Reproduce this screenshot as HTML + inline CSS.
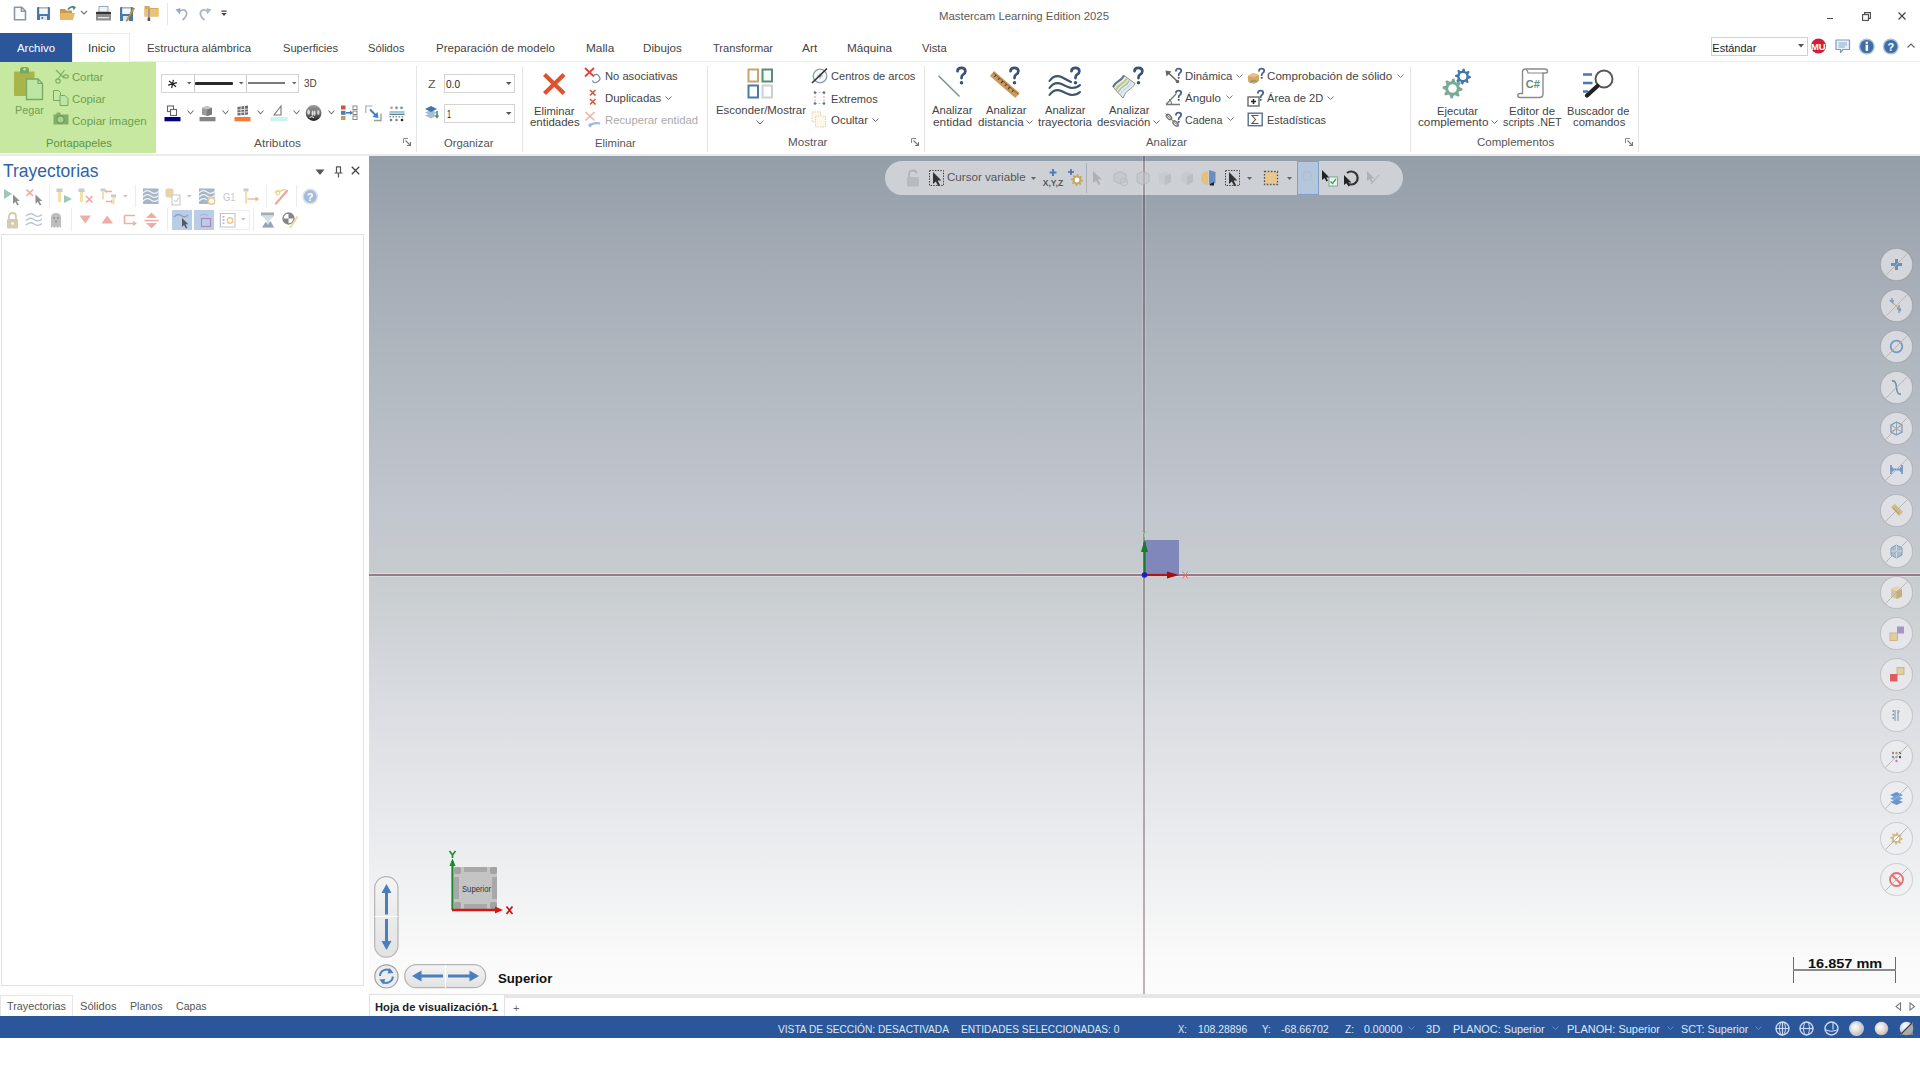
<!DOCTYPE html>
<html><head><meta charset="utf-8"><title>Mastercam</title>
<style>
html,body{margin:0;padding:0;width:1920px;height:1080px;overflow:hidden;background:#fff;}
body{position:relative;font-family:"Liberation Sans",sans-serif;}
.t{position:absolute;z-index:5;white-space:nowrap;line-height:normal;transform-origin:0 0;}
.r{position:absolute;}
svg.r{overflow:visible;}
</style></head><body>
<div class="r" style="left:0px;top:0px;width:1920px;height:156px;background:#fff"></div>
<div class="r" style="left:0px;top:33px;width:72px;height:29px;background:#2b579a"></div>
<div class="r" style="left:72px;top:33px;width:58px;height:29px;background:#fff;border:1px solid #ececec;border-bottom:none;box-sizing:border-box"></div>
<div class="r" style="left:130px;top:61px;width:1790px;height:1px;background:#ececec"></div>
<div class="r" style="left:0px;top:62px;width:156px;height:91px;background:#c6e8a0"></div>
<div class="r" style="left:0px;top:154px;width:1920px;height:2px;background:#ebebeb"></div>
<div class="r" style="left:369px;top:156px;width:1551px;height:838px;background:linear-gradient(to bottom,#939ea8 0px,#a3aab4 96px,#b0b7bf 206px,#c1c5ce 346px,#c7cccf 420px,#d9dce1 546px,#ecedef 696px,#fafafa 806px,#fcfcfc 838px)"></div>
<div class="r" style="left:0px;top:156px;width:369px;height:838px;background:#fff"></div>
<div class="r" style="left:1px;top:234px;width:363px;height:752px;background:#fff;border:1px solid #e2e2e2;box-sizing:border-box"></div>
<div class="r" style="left:369px;top:994px;width:1551px;height:4px;background:#e6e6e6"></div>
<div class="r" style="left:0px;top:1016px;width:1920px;height:22px;background:#2b579a"></div>
<div class="r" style="left:369px;top:573px;width:1551px;height:1px;background:rgba(255,245,255,0.35)"></div>
<div class="r" style="left:369px;top:576px;width:1551px;height:1px;background:rgba(255,245,255,0.35)"></div>
<div class="r" style="left:369px;top:574px;width:1551px;height:2px;background:#9a7a87"></div>
<div class="r" style="left:416px;top:66px;width:1px;height:86px;background:#e4e4e4"></div>
<div class="r" style="left:522px;top:66px;width:1px;height:86px;background:#e4e4e4"></div>
<div class="r" style="left:707px;top:66px;width:1px;height:86px;background:#e4e4e4"></div>
<div class="r" style="left:924px;top:66px;width:1px;height:86px;background:#e4e4e4"></div>
<div class="r" style="left:1410px;top:66px;width:1px;height:86px;background:#e4e4e4"></div>
<div class="r" style="left:1638px;top:66px;width:1px;height:86px;background:#e4e4e4"></div>
<div class="t" style="left:939.00px;top:10.35px;font-size:11px;color:#5a5a5a;font-weight:normal;transform:scaleX(1.0336);">Mastercam Learning Edition 2025</div>
<div class="t" style="left:17.30px;top:42.05px;font-size:11px;color:#ffffff;font-weight:normal;transform:scaleX(1.0360);">Archivo</div>
<div class="t" style="left:88.00px;top:42.05px;font-size:11px;color:#333;font-weight:normal;transform:scaleX(1.0632);">Inicio</div>
<div class="t" style="left:147.00px;top:42.05px;font-size:11px;color:#444;font-weight:normal;transform:scaleX(1.0311);">Estructura alámbrica</div>
<div class="t" style="left:283.00px;top:42.05px;font-size:11px;color:#444;font-weight:normal;transform:scaleX(1.0108);">Superficies</div>
<div class="t" style="left:368.00px;top:42.05px;font-size:11px;color:#444;font-weight:normal;transform:scaleX(1.0145);">Sólidos</div>
<div class="t" style="left:436.00px;top:42.05px;font-size:11px;color:#444;font-weight:normal;transform:scaleX(1.0463);">Preparación de modelo</div>
<div class="t" style="left:586.00px;top:42.05px;font-size:11px;color:#444;font-weight:normal;transform:scaleX(1.0767);">Malla</div>
<div class="t" style="left:643.40px;top:42.05px;font-size:11px;color:#444;font-weight:normal;transform:scaleX(1.0577);">Dibujos</div>
<div class="t" style="left:712.50px;top:42.05px;font-size:11px;color:#444;font-weight:normal;transform:scaleX(1.0086);">Transformar</div>
<div class="t" style="left:802.30px;top:42.05px;font-size:11px;color:#444;font-weight:normal;transform:scaleX(1.0814);">Art</div>
<div class="t" style="left:847.00px;top:42.05px;font-size:11px;color:#444;font-weight:normal;transform:scaleX(1.0665);">Máquina</div>
<div class="t" style="left:921.90px;top:42.05px;font-size:11px;color:#444;font-weight:normal;transform:scaleX(1.0183);">Vista</div>
<div class="t" style="left:1712.30px;top:41.55px;font-size:11px;color:#222;font-weight:normal;">Estándar</div>
<div class="t" style="left:14.50px;top:103.80px;font-size:11px;color:#6f9f52;font-weight:normal;transform:scaleX(0.9795);">Pegar</div>
<div class="t" style="left:72.00px;top:71.30px;font-size:11px;color:#6f9f52;font-weight:normal;transform:scaleX(1.0226);">Cortar</div>
<div class="t" style="left:72.00px;top:92.55px;font-size:11px;color:#6f9f52;font-weight:normal;transform:scaleX(1.0339);">Copiar</div>
<div class="t" style="left:72.00px;top:114.55px;font-size:11px;color:#6f9f52;font-weight:normal;transform:scaleX(1.0450);">Copiar imagen</div>
<div class="t" style="left:46.25px;top:136.79px;font-size:11px;color:#5f9545;font-weight:normal;transform:scaleX(1.0143);">Portapapeles</div>
<div class="t" style="left:303.70px;top:77.45px;font-size:11px;color:#444;font-weight:normal;transform:scaleX(0.9032);">3D</div>
<div class="t" style="left:253.80px;top:136.54px;font-size:11px;color:#555;font-weight:normal;transform:scaleX(1.0828);">Atributos</div>
<div class="t" style="left:428.00px;top:78.14px;font-size:11px;color:#555;font-weight:normal;transform:scaleX(1.1312);">Z</div>
<div class="t" style="left:446.00px;top:78.05px;font-size:11px;color:#222;font-weight:normal;transform:scaleX(0.9156);">0.0</div>
<div class="t" style="left:447.00px;top:107.84px;font-size:11px;color:#222;font-weight:normal;transform:scaleX(0.6539);">1</div>
<div class="t" style="left:444.40px;top:136.74px;font-size:11px;color:#555;font-weight:normal;transform:scaleX(1.0250);">Organizar</div>
<div class="t" style="left:534.20px;top:104.75px;font-size:11px;color:#444;font-weight:normal;transform:scaleX(1.0219);">Eliminar</div>
<div class="t" style="left:529.50px;top:115.64px;font-size:11px;color:#444;font-weight:normal;transform:scaleX(1.0419);">entidades</div>
<div class="t" style="left:604.50px;top:70.34px;font-size:11px;color:#444;font-weight:normal;transform:scaleX(1.0164);">No asociativas</div>
<div class="t" style="left:604.50px;top:92.25px;font-size:11px;color:#444;font-weight:normal;transform:scaleX(1.0346);">Duplicadas</div>
<div class="t" style="left:604.50px;top:114.05px;font-size:11px;color:#aaa;font-weight:normal;transform:scaleX(1.0277);">Recuperar entidad</div>
<div class="t" style="left:594.80px;top:136.74px;font-size:11px;color:#555;font-weight:normal;transform:scaleX(1.0245);">Eliminar</div>
<div class="t" style="left:715.60px;top:104.45px;font-size:11px;color:#444;font-weight:normal;transform:scaleX(1.0368);">Esconder/Mostrar</div>
<div class="t" style="left:830.60px;top:70.05px;font-size:11px;color:#444;font-weight:normal;transform:scaleX(1.0077);">Centros de arcos</div>
<div class="t" style="left:830.60px;top:92.55px;font-size:11px;color:#444;font-weight:normal;transform:scaleX(1.0053);">Extremos</div>
<div class="t" style="left:830.60px;top:114.45px;font-size:11px;color:#444;font-weight:normal;transform:scaleX(1.0436);">Ocultar</div>
<div class="t" style="left:788.00px;top:136.34px;font-size:11px;color:#555;font-weight:normal;transform:scaleX(1.0596);">Mostrar</div>
<div class="t" style="left:932.10px;top:104.45px;font-size:11px;color:#444;font-weight:normal;transform:scaleX(1.0217);">Analizar</div>
<div class="t" style="left:932.50px;top:115.64px;font-size:11px;color:#444;font-weight:normal;transform:scaleX(1.0808);">entidad</div>
<div class="t" style="left:985.60px;top:104.45px;font-size:11px;color:#444;font-weight:normal;transform:scaleX(1.0217);">Analizar</div>
<div class="t" style="left:978.00px;top:115.64px;font-size:11px;color:#444;font-weight:normal;transform:scaleX(1.0538);">distancia</div>
<div class="t" style="left:1045.00px;top:104.45px;font-size:11px;color:#444;font-weight:normal;transform:scaleX(1.0217);">Analizar</div>
<div class="t" style="left:1038.00px;top:115.64px;font-size:11px;color:#444;font-weight:normal;transform:scaleX(1.0497);">trayectoria</div>
<div class="t" style="left:1108.50px;top:104.45px;font-size:11px;color:#444;font-weight:normal;transform:scaleX(1.0217);">Analizar</div>
<div class="t" style="left:1097.25px;top:115.64px;font-size:11px;color:#444;font-weight:normal;transform:scaleX(1.0274);">desviación</div>
<div class="t" style="left:1185.00px;top:70.45px;font-size:11px;color:#444;font-weight:normal;transform:scaleX(1.0339);">Dinámica</div>
<div class="t" style="left:1185.00px;top:92.25px;font-size:11px;color:#444;font-weight:normal;transform:scaleX(1.0511);">Ángulo</div>
<div class="t" style="left:1185.00px;top:114.05px;font-size:11px;color:#444;font-weight:normal;transform:scaleX(0.9707);">Cadena</div>
<div class="t" style="left:1267.00px;top:70.45px;font-size:11px;color:#444;font-weight:normal;transform:scaleX(1.0555);">Comprobación de sólido</div>
<div class="t" style="left:1267.00px;top:92.25px;font-size:11px;color:#444;font-weight:normal;transform:scaleX(1.0118);">Área de 2D</div>
<div class="t" style="left:1267.00px;top:114.05px;font-size:11px;color:#444;font-weight:normal;transform:scaleX(0.9949);">Estadísticas</div>
<div class="t" style="left:1146.00px;top:136.34px;font-size:11px;color:#555;font-weight:normal;transform:scaleX(1.0317);">Analizar</div>
<div class="t" style="left:1437.40px;top:105.05px;font-size:11px;color:#444;font-weight:normal;transform:scaleX(1.0161);">Ejecutar</div>
<div class="t" style="left:1418.40px;top:116.05px;font-size:11px;color:#444;font-weight:normal;transform:scaleX(1.0662);">complemento</div>
<div class="t" style="left:1509.00px;top:105.05px;font-size:11px;color:#444;font-weight:normal;transform:scaleX(1.0494);">Editor de</div>
<div class="t" style="left:1503.00px;top:116.05px;font-size:11px;color:#444;font-weight:normal;transform:scaleX(0.9801);">scripts .NET</div>
<div class="t" style="left:1567.40px;top:105.05px;font-size:11px;color:#444;font-weight:normal;transform:scaleX(1.0088);">Buscador de</div>
<div class="t" style="left:1572.50px;top:116.05px;font-size:11px;color:#444;font-weight:normal;transform:scaleX(1.0306);">comandos</div>
<div class="t" style="left:1477.20px;top:136.34px;font-size:11px;color:#555;font-weight:normal;transform:scaleX(1.0436);">Complementos</div>
<div class="t" style="left:2.50px;top:161.01px;font-size:18px;color:#2f64a8;font-weight:normal;transform:scaleX(0.9709);">Trayectorias</div>
<div class="t" style="left:7.00px;top:1000.04px;font-size:11px;color:#555;font-weight:normal;transform:scaleX(0.9816);">Trayectorias</div>
<div class="t" style="left:80.00px;top:1000.04px;font-size:11px;color:#555;font-weight:normal;transform:scaleX(1.0117);">Sólidos</div>
<div class="t" style="left:130.00px;top:1000.04px;font-size:11px;color:#555;font-weight:normal;transform:scaleX(0.9663);">Planos</div>
<div class="t" style="left:175.60px;top:1000.04px;font-size:11px;color:#555;font-weight:normal;transform:scaleX(0.9624);">Capas</div>
<div class="t" style="left:946.60px;top:170.74px;font-size:11px;color:#555;font-weight:normal;transform:scaleX(1.0539);">Cursor variable</div>
<div class="t" style="left:497.70px;top:970.94px;font-size:13px;color:#111;font-weight:bold;transform:scaleX(1.0158);">Superior</div>
<div class="t" style="left:1808.30px;top:955.74px;font-size:13px;color:#111;font-weight:bold;transform:scaleX(1.1159);">16.857 mm</div>
<div class="t" style="left:375.00px;top:1000.64px;font-size:11px;color:#222;font-weight:bold;transform:scaleX(1.0163);">Hoja de visualización-1</div>
<div class="t" style="left:777.90px;top:1022.70px;font-size:10.5px;color:#dfe8f5;font-weight:normal;transform:scaleX(0.9694);">VISTA DE SECCIÓN: DESACTIVADA</div>
<div class="t" style="left:961.30px;top:1022.70px;font-size:10.5px;color:#dfe8f5;font-weight:normal;transform:scaleX(0.9661);">ENTIDADES SELECCIONADAS: 0</div>
<div class="t" style="left:1178.40px;top:1022.70px;font-size:10.5px;color:#dfe8f5;font-weight:normal;transform:scaleX(0.8971);">X:</div>
<div class="t" style="left:1197.50px;top:1022.70px;font-size:10.5px;color:#dfe8f5;font-weight:normal;transform:scaleX(0.9913);">108.28896</div>
<div class="t" style="left:1262.30px;top:1022.70px;font-size:10.5px;color:#dfe8f5;font-weight:normal;transform:scaleX(0.9314);">Y:</div>
<div class="t" style="left:1281.00px;top:1022.70px;font-size:10.5px;color:#dfe8f5;font-weight:normal;transform:scaleX(1.0098);">-68.66702</div>
<div class="t" style="left:1345.00px;top:1022.70px;font-size:10.5px;color:#dfe8f5;font-weight:normal;transform:scaleX(0.9645);">Z:</div>
<div class="t" style="left:1363.90px;top:1022.70px;font-size:10.5px;color:#dfe8f5;font-weight:normal;transform:scaleX(1.0092);">0.00000</div>
<div class="t" style="left:1425.60px;top:1022.70px;font-size:10.5px;color:#dfe8f5;font-weight:normal;transform:scaleX(1.0505);">3D</div>
<div class="t" style="left:1452.75px;top:1022.70px;font-size:10.5px;color:#dfe8f5;font-weight:normal;transform:scaleX(1.0338);">PLANOC: Superior</div>
<div class="t" style="left:1566.60px;top:1022.70px;font-size:10.5px;color:#dfe8f5;font-weight:normal;transform:scaleX(1.0485);">PLANOH: Superior</div>
<div class="t" style="left:1680.80px;top:1022.70px;font-size:10.5px;color:#dfe8f5;font-weight:normal;transform:scaleX(1.0297);">SCT: Superior</div>
<svg class="r" style="left:13px;top:6px;" width="14" height="15" viewBox="0 0 14 15"><path d="M1.5 1.2 H8.5 L12.5 5 V13.8 H1.5 Z" fill="#fafcff" stroke="#8c97a2" stroke-width="1.6" stroke-linejoin="round"/><path d="M8.3 1.3 V5.2 H12.4" fill="none" stroke="#8c97a2" stroke-width="1.4"/></svg>
<svg class="r" style="left:36px;top:6px;" width="15" height="15" viewBox="0 0 15 15"><path d="M1 2 Q1 1 2 1 H13 Q14 1 14 2 V14 H1 Z" fill="#4b78a9"/><rect x="3.2" y="1" width="8.6" height="1.4" fill="#e0a890"/><rect x="3.2" y="2.4" width="8.6" height="5.6" fill="#f4f8fc"/><rect x="4" y="10" width="7" height="4" fill="#dfe8f2"/><rect x="5.5" y="11.2" width="1.6" height="1.6" fill="#37587d"/></svg>
<svg class="r" style="left:59px;top:5px;" width="18" height="16" viewBox="0 0 18 16"><path d="M1 4 H6 L7.5 5.5 H13 V15 H1 Z" fill="#c89b4a"/><path d="M1.5 8 H16 L14 15 H1 Z" fill="#e8b968"/><path d="M9 4.5 Q12 0.5 15.5 2.5" fill="none" stroke="#4e8a70" stroke-width="1.8"/><path d="M13.5 0.5 L17 2.2 L14.5 5.5 Z" fill="#4e8a70"/></svg>
<svg class="r" style="left:80px;top:10px;" width="8" height="5" viewBox="0 0 8 5"><path d="M1 1 L4 4 L7 1" fill="none" stroke="#777" stroke-width="1.2"/></svg>
<svg class="r" style="left:95px;top:6px;" width="17" height="16" viewBox="0 0 17 16"><rect x="4" y="0.5" width="9" height="7" fill="#eef4fa" stroke="#9aa8b2" stroke-width="1"/><path d="M1 7 Q1 5.5 3 5.5 H14 Q16 5.5 16 7 V14.5 H1 Z" fill="#8d8d8d"/><rect x="1" y="6" width="15" height="2" fill="#333"/><rect x="3" y="11" width="11" height="1.3" fill="#e9e9e9"/></svg>
<svg class="r" style="left:119px;top:6px;" width="17" height="16" viewBox="0 0 17 16"><path d="M1 2 Q1 1 2 1 H13 Q14 1 14 2 V15 H1 Z" fill="#4b78a9"/><rect x="3.2" y="1" width="8.6" height="1.4" fill="#e79aa0"/><rect x="3.2" y="2.4" width="8.6" height="5.6" fill="#f4f8fc"/><rect x="4" y="10" width="6" height="5" fill="#dfe8f2"/><path d="M15.5 2.5 L9 14 L7.5 15.5 L8 13 L14 2 Z" fill="#d8b640" stroke="#8a6a20" stroke-width="0.6"/></svg>
<svg class="r" style="left:144px;top:5px;" width="15" height="17" viewBox="0 0 15 17"><path d="M0.5 1 H5 L6.5 3 H14.5 V11.5 H0.5 Z" fill="#d6aa55"/><rect x="0.5" y="4" width="14" height="7.5" fill="#ecc374"/><rect x="4" y="4" width="1.8" height="9" fill="#9a9aa8"/><rect x="3.6" y="12.5" width="2.6" height="3.5" rx="0.6" fill="#555"/></svg>
<div class="r" style="left:167px;top:3px;width:1px;height:22px;background:#e6e6e6"></div>
<svg class="r" style="left:175px;top:7px;" width="14" height="14" viewBox="0 0 14 14"><path d="M4 4.5 Q10 1 11.5 5.5 Q12.5 9 7.5 13" fill="none" stroke="#a9b6c2" stroke-width="1.8"/><path d="M0.5 2.5 L5.5 1 L5 7.5 Z" fill="#92aac4"/></svg>
<svg class="r" style="left:198px;top:7px;" width="14" height="14" viewBox="0 0 14 14"><path d="M10 4.5 Q4 1 2.5 5.5 Q1.5 9 6.5 13" fill="none" stroke="#a9b6c2" stroke-width="1.8"/><path d="M13.5 2.5 L8.5 1 L9 7.5 Z" fill="#a6bcd4"/></svg>
<svg class="r" style="left:221px;top:10px;" width="6" height="7" viewBox="0 0 6 7"><rect x="0.5" y="0.5" width="5" height="1.3" fill="#444"/><path d="M0.3 3 H5.7 L3 6 Z" fill="#444"/></svg>
<div class="r" style="left:1826.5px;top:17.5px;width:6.5px;height:1.6px;background:#4a4a4a"></div>
<svg class="r" style="left:1862px;top:11.5px;" width="9" height="9" viewBox="0 0 9 9"><rect x="0.6" y="2.6" width="5.8" height="5.8" fill="none" stroke="#4a4a4a" stroke-width="1.1"/><path d="M2.6 2.6 V0.6 H8.4 V6.4 H6.4" fill="none" stroke="#4a4a4a" stroke-width="1.1"/></svg>
<svg class="r" style="left:1898px;top:12px;" width="8" height="8" viewBox="0 0 8 8"><path d="M0.5 0.5 L7.5 7.5 M7.5 0.5 L0.5 7.5" stroke="#444" stroke-width="1.2"/></svg>
<div class="r" style="left:1711px;top:37px;width:97px;height:19px;background:#fff;border:1px solid #d0d0d0;box-sizing:border-box"></div>
<svg class="r" style="left:1798px;top:44px;" width="7" height="4" viewBox="0 0 7 4"><path d="M0 0 H6 L3 3.5 Z" fill="#555"/></svg>
<svg class="r" style="left:1810px;top:38px;" width="18" height="16" viewBox="0 0 18 16"><circle cx="8.5" cy="8" r="7.6" fill="#d11f3a"/><text x="8.3" y="11.6" font-family="Liberation Sans" font-weight="bold" font-size="9.5" fill="#fff" text-anchor="middle">MU</text></svg>
<svg class="r" style="left:1835px;top:39px;" width="16" height="15" viewBox="0 0 16 15"><path d="M1 1 H14.5 V10.5 H8 L5.5 13.5 V10.5 H1 Z" fill="#e9f0f8" stroke="#7d9cc0" stroke-width="1.2" stroke-linejoin="round"/><path d="M3.5 4 H12 M3.5 6 H12 M3.5 8 H10" stroke="#8aa8cc" stroke-width="1"/></svg>
<svg class="r" style="left:1858px;top:38px;" width="18" height="17" viewBox="0 0 18 17"><circle cx="8.8" cy="8.5" r="8" fill="#a8c0dc"/><circle cx="8.8" cy="8.5" r="6.6" fill="#3f6ea6"/><circle cx="8.8" cy="4.8" r="1.3" fill="#fff"/><rect x="7.6" y="6.8" width="2.5" height="6" fill="#fff"/></svg>
<svg class="r" style="left:1882px;top:38px;" width="18" height="17" viewBox="0 0 18 17"><circle cx="8.8" cy="8.5" r="8" fill="#a8c0dc"/><circle cx="8.8" cy="8.5" r="6.6" fill="#3f6ea6"/><text x="8.8" y="12.6" font-family="Liberation Sans" font-weight="bold" font-size="11" fill="#fff" text-anchor="middle">?</text></svg>
<svg class="r" style="left:1907px;top:43px;" width="8" height="5" viewBox="0 0 8 5"><path d="M0.5 4.5 L4 1 L7.5 4.5" fill="none" stroke="#666" stroke-width="1.2"/></svg>
<svg class="r" style="left:13px;top:66px;" width="31" height="35" viewBox="0 0 31 35"><rect x="1" y="5.5" width="20.5" height="24.5" rx="1" fill="#a9b54a"/><path d="M7 7.5 V3.5 Q7 1 10 1 H13 Q16 1 16 3.5 V7.5 Z" fill="#78a85e"/><circle cx="11.5" cy="3.2" r="1.2" fill="#c6e8a0"/><path d="M13.5 13 H25 L29.5 17.5 V33.5 H13.5 Z" fill="#bde6a4" stroke="#79a863" stroke-width="1.3"/><path d="M25 13 V17.5 H29.5" fill="none" stroke="#79a863" stroke-width="1.2"/></svg>
<svg class="r" style="left:54px;top:69px;" width="15" height="15" viewBox="0 0 15 15"><path d="M2 1 L10 9 M10.5 1 L4 10" stroke="#80ad66" stroke-width="1.2"/><circle cx="4" cy="12" r="2.2" fill="none" stroke="#80ad66" stroke-width="1.2"/><ellipse cx="12" cy="7.5" rx="2.3" ry="1.6" fill="none" stroke="#80ad66" stroke-width="1.2"/></svg>
<svg class="r" style="left:53px;top:90px;" width="16" height="16" viewBox="0 0 16 16"><path d="M0.5 0.5 H5.5 L7.5 2.5 V10.5 H0.5 Z" fill="#c6e8a0" stroke="#7aa863" stroke-width="1"/><path d="M7 5.5 H12 L15 8.5 V15.5 H7 Z" fill="#bde6a4" stroke="#7aa863" stroke-width="1"/></svg>
<svg class="r" style="left:53px;top:112px;" width="17" height="14" viewBox="0 0 17 14"><path d="M0.5 2.5 H3 L4 0.5 H7 L8 2.5 H15.5 V12.5 H0.5 Z" fill="#7fae68"/><circle cx="7.5" cy="7.5" r="3.6" fill="#a8d48e" stroke="#6d9c57" stroke-width="1.2"/></svg>
<div class="r" style="left:161px;top:74px;width:138px;height:19px;background:#fff;border:1px solid #d4d4d4;box-sizing:border-box"></div>
<div class="r" style="left:194px;top:75px;width:1px;height:17px;background:#c8c8c8"></div>
<div class="r" style="left:246px;top:75px;width:1px;height:17px;background:#c8c8c8"></div>
<svg class="r" style="left:167px;top:79px;transform:rotate(12deg)" width="11" height="10" viewBox="0 0 11 10"><path d="M5.5 0.8 V9.2 M1.5 2.8 L9.5 7 M9.5 2.8 L1.5 7" stroke="#222" stroke-width="1.2"/></svg>
<svg class="r" style="left:186.5px;top:82px;" width="5" height="3" viewBox="0 0 5 3"><path d="M0 0 H4.5 L2.25 2.6 Z" fill="#666"/></svg>
<svg class="r" style="left:239px;top:82px;" width="5" height="3" viewBox="0 0 5 3"><path d="M0 0 H4.5 L2.25 2.6 Z" fill="#666"/></svg>
<svg class="r" style="left:291.5px;top:82px;" width="5" height="3" viewBox="0 0 5 3"><path d="M0 0 H4.5 L2.25 2.6 Z" fill="#666"/></svg>
<div class="r" style="left:195px;top:82px;width:38px;height:3px;background:#2a2a2a;border-radius:1px"></div>
<div class="r" style="left:248px;top:82px;width:37px;height:2px;background:#7a7a7a"></div>
<svg class="r" style="left:164px;top:105px;" width="17" height="17" viewBox="0 0 17 17"><rect x="3.5" y="1" width="6" height="5.5" fill="#fff" stroke="#666" stroke-width="1.1"/><rect x="6.5" y="4.5" width="6" height="6" fill="#fff" stroke="#666" stroke-width="1.1"/><rect x="0.5" y="12" width="16" height="4.3" fill="#000080"/></svg>
<svg class="r" style="left:199px;top:105px;" width="17" height="17" viewBox="0 0 17 17"><path d="M3 3 L8 1 L13 3 V9.5 L8 11 L3 9.5 Z" fill="#9a9a9a"/><path d="M3 3 L8 4.6 L13 3 L8 1 Z" fill="#c4c4c4"/><path d="M8 4.6 V11 L13 9.5 V3 Z" fill="#7a7a7a"/><rect x="0.5" y="12" width="16" height="4.3" fill="#858585"/></svg>
<svg class="r" style="left:234px;top:105px;" width="17" height="17" viewBox="0 0 17 17"><path d="M3.5 2 L14 0.5 V9.5 L3.5 10.5 Z" fill="#6d6d6d"/><path d="M7 1.5 V10 M10.5 1 V9.8 M3.5 5 L14 4 M3.5 7.7 L14 6.8" stroke="#e8e8e8" stroke-width="0.9"/><rect x="0.5" y="12" width="16" height="4.3" fill="#f47b35"/></svg>
<svg class="r" style="left:270px;top:105px;" width="18" height="17" viewBox="0 0 18 17"><path d="M11 1 V10 H4 Z" fill="none" stroke="#777" stroke-width="1.1"/><rect x="0.5" y="12" width="17" height="4.3" fill="#c9f4f4"/></svg>
<svg class="r" style="left:187px;top:110px;" width="7" height="5" viewBox="0 0 7 5"><path d="M0.5 0.5 L3.5 3.8 L6.5 0.5" fill="none" stroke="#777" stroke-width="1.1"/></svg>
<svg class="r" style="left:222px;top:110px;" width="7" height="5" viewBox="0 0 7 5"><path d="M0.5 0.5 L3.5 3.8 L6.5 0.5" fill="none" stroke="#777" stroke-width="1.1"/></svg>
<svg class="r" style="left:257px;top:110px;" width="7" height="5" viewBox="0 0 7 5"><path d="M0.5 0.5 L3.5 3.8 L6.5 0.5" fill="none" stroke="#777" stroke-width="1.1"/></svg>
<svg class="r" style="left:293px;top:110px;" width="7" height="5" viewBox="0 0 7 5"><path d="M0.5 0.5 L3.5 3.8 L6.5 0.5" fill="none" stroke="#777" stroke-width="1.1"/></svg>
<svg class="r" style="left:328px;top:110px;" width="7" height="5" viewBox="0 0 7 5"><path d="M0.5 0.5 L3.5 3.8 L6.5 0.5" fill="none" stroke="#777" stroke-width="1.1"/></svg>
<svg class="r" style="left:305px;top:105px;" width="17" height="17" viewBox="0 0 17 17"><defs><linearGradient id="gg" x1="0" y1="0" x2="0" y2="1"><stop offset="0" stop-color="#9a9a9a"/><stop offset="0.55" stop-color="#6a6a6a"/><stop offset="1" stop-color="#1e1e1e"/></linearGradient></defs><circle cx="8.6" cy="8" r="7.9" fill="url(#gg)"/><ellipse cx="3.6" cy="7.2" rx="1.3" ry="2.6" fill="#f4f0f0" opacity="0.85"/><ellipse cx="7.6" cy="8.3" rx="1" ry="2.8" fill="#f4f4f4" opacity="0.85"/><ellipse cx="9.6" cy="8.3" rx="1" ry="2.8" fill="#f4f4f4" opacity="0.8"/><ellipse cx="13.3" cy="7.5" rx="1.2" ry="2.4" fill="#e8e8e8" opacity="0.8"/><path d="M4.5 12.4 Q7 11 9 12.8" fill="none" stroke="#fff" stroke-width="1.1" opacity="0.8"/></svg>
<svg class="r" style="left:340px;top:105px;" width="18" height="16" viewBox="0 0 18 16"><rect x="1" y="0.5" width="4.5" height="4" fill="#c9553e"/><rect x="1" y="5.8" width="4.5" height="4" fill="#4b7ea8"/><rect x="1" y="11" width="4.5" height="4" fill="#c49a68"/><path d="M6 7.8 H11" stroke="#3e7cc0" stroke-width="1.6"/><path d="M10 5.5 L13 7.8 L10 10 Z" fill="#3e7cc0"/><rect x="13" y="1" width="4" height="3.5" fill="#fff" stroke="#888" stroke-width="1"/><rect x="13" y="6" width="4" height="3.5" fill="#fff" stroke="#888" stroke-width="1"/><rect x="13" y="11" width="4" height="3.5" fill="#fff" stroke="#888" stroke-width="1"/></svg>
<svg class="r" style="left:365px;top:105px;" width="17" height="17" viewBox="0 0 17 17"><path d="M0.8 8 V1 H7.5" fill="none" stroke="#aaa" stroke-width="1.2"/><path d="M16 8.5 V15.5 H9" fill="none" stroke="#999" stroke-width="1.3"/><path d="M5 4.5 L12 11.5" stroke="#3f7fc7" stroke-width="2"/><path d="M13.5 13 L7.5 12 L12.5 7 Z" fill="#3f7fc7"/></svg>
<svg class="r" style="left:389px;top:106px;" width="16" height="16" viewBox="0 0 16 16"><circle cx="2.5" cy="1.8" r="1.4" fill="#c6a08a"/><circle cx="7.5" cy="1.8" r="1.4" fill="#6e94b0"/><circle cx="12.5" cy="1.8" r="1.4" fill="#6e94b0"/><rect x="0.5" y="5" width="15" height="2.4" fill="#a8c6d2"/><rect x="0.5" y="7.8" width="15" height="1.2" fill="#5a8090"/><path d="M0.5 10.7 H15.5" stroke="#7b9aa8" stroke-width="1.4" stroke-dasharray="1.6 1.4"/><circle cx="2" cy="14" r="1.3" fill="#5a8a90"/><circle cx="7.5" cy="14" r="1.3" fill="#c46a7a"/><circle cx="13" cy="14" r="1.3" fill="#222"/></svg>
<svg class="r" style="left:403px;top:138px;" width="9" height="9" viewBox="0 0 9 9"><path d="M0.5 5 V0.5 H5" fill="none" stroke="#888" stroke-width="1"/><path d="M2.5 2.5 L7.5 7.5 M7.5 4 V7.5 H4" fill="none" stroke="#777" stroke-width="1.1"/></svg>
<svg class="r" style="left:911px;top:138px;" width="9" height="9" viewBox="0 0 9 9"><path d="M0.5 5 V0.5 H5" fill="none" stroke="#888" stroke-width="1"/><path d="M2.5 2.5 L7.5 7.5 M7.5 4 V7.5 H4" fill="none" stroke="#777" stroke-width="1.1"/></svg>
<svg class="r" style="left:1625px;top:138px;" width="9" height="9" viewBox="0 0 9 9"><path d="M0.5 5 V0.5 H5" fill="none" stroke="#888" stroke-width="1"/><path d="M2.5 2.5 L7.5 7.5 M7.5 4 V7.5 H4" fill="none" stroke="#777" stroke-width="1.1"/></svg>
<div class="r" style="left:444px;top:74px;width:71px;height:19px;background:#fff;border:1px solid #d4d4d4;box-sizing:border-box"></div>
<div class="r" style="left:444px;top:104px;width:71px;height:19px;background:#fff;border:1px solid #d4d4d4;box-sizing:border-box"></div>
<svg class="r" style="left:506px;top:82px;" width="6" height="4" viewBox="0 0 6 4"><path d="M0 0 H5.5 L2.75 3 Z" fill="#555"/></svg>
<svg class="r" style="left:506px;top:112px;" width="6" height="4" viewBox="0 0 6 4"><path d="M0 0 H5.5 L2.75 3 Z" fill="#555"/></svg>
<svg class="r" style="left:424px;top:105px;" width="17" height="16" viewBox="0 0 17 16"><path d="M1 10.5 L7 8 L13 10.5 L7 13.5 Z" fill="#b9b9b9"/><path d="M1 7.5 L7 5 L13 7.5 L7 10.5 Z" fill="#9cc1dc"/><path d="M1 4 L7 1 L13 4 L7 7 Z" fill="#3f75b0"/><path d="M13 6 V12" stroke="#4a8a6a" stroke-width="1.6"/><path d="M10.8 10.5 H15.2 L13 13.8 Z" fill="#4a8a6a"/></svg>
<svg class="r" style="left:542px;top:72px;" width="25" height="24" viewBox="0 0 25 24"><path d="M2.5 2.5 L22 21.5 M22 2.5 L2.5 21.5" stroke="#e0512e" stroke-width="4.2"/></svg>
<svg class="r" style="left:584px;top:67px;" width="18" height="18" viewBox="0 0 18 18"><path d="M1 1 L10 9.5 M10 1 L1 9.5" stroke="#d9453a" stroke-width="1.8"/><path d="M9.5 8.5 Q12 6.5 14 8 L15.5 10 Q17 12.5 14 14.5 L12 15.5 Q9.5 16.5 8.5 13.5" fill="none" stroke="#6f8e9e" stroke-width="1.2"/></svg>
<svg class="r" style="left:589px;top:89px;" width="8" height="17" viewBox="0 0 8 17"><path d="M1 1 L6.5 6.5 M6.5 1 L1 6.5 M1 10 L6.5 15.5 M6.5 10 L1 15.5" stroke="#d9553a" stroke-width="1.6"/></svg>
<svg class="r" style="left:584px;top:111px;" width="18" height="17" viewBox="0 0 18 17"><path d="M1.5 1 L10.5 9.5 M10.5 1 L1.5 9.5" stroke="#f0b4aa" stroke-width="1.7"/><path d="M5 15.5 Q9 11 16 12.5" stroke="#9cbbdd" stroke-width="2.3" fill="none"/><path d="M4 13 L8 12 L6.5 16.5 Z" fill="#9cbbdd"/></svg>
<svg class="r" style="left:665px;top:96px;" width="7" height="5" viewBox="0 0 7 5"><path d="M0.5 0.5 L3.5 3.5 L6.5 0.5" fill="none" stroke="#666" stroke-width="1"/></svg>
<svg class="r" style="left:746px;top:67px;" width="29" height="33" viewBox="0 0 29 33"><rect x="2.5" y="2.5" width="9.5" height="12" fill="#fff" stroke="#c9a36e" stroke-width="2"/><rect x="16.5" y="2.5" width="9.5" height="12" fill="#f2fbf8" stroke="#5d8c74" stroke-width="2"/><rect x="2.5" y="18.5" width="9.5" height="12" fill="#fff" stroke="#4a78aa" stroke-width="2"/><rect x="16.5" y="18.5" width="9.5" height="12" fill="#fff" stroke="#cfcfcf" stroke-width="2"/></svg>
<svg class="r" style="left:756px;top:120px;" width="8" height="5" viewBox="0 0 8 5"><path d="M0.5 0.5 L4 4 L7.5 0.5" fill="none" stroke="#666" stroke-width="1"/></svg>
<svg class="r" style="left:811px;top:67px;" width="17" height="17" viewBox="0 0 17 17"><circle cx="9" cy="9" r="6.8" fill="#f4f8fb" stroke="#8ea0ae" stroke-width="1.3"/><path d="M6.5 9 H11.5 M9 6.5 V11.5" stroke="#888" stroke-width="1"/><path d="M1 16 L16 1.5" stroke="#333" stroke-width="1.7"/></svg>
<svg class="r" style="left:813px;top:91px;" width="13" height="14" viewBox="0 0 13 14"><path d="M2 1.5 V12.5 M11 1.5 V12.5" stroke="#d4b48e" stroke-width="1.2" stroke-dasharray="2 1.5"/><path d="M2 1.5 H11 M2 12.5 H11" stroke="#b8c4cc" stroke-width="1" stroke-dasharray="2 1.5"/><circle cx="2" cy="1.5" r="1.3" fill="#5a7488"/><circle cx="11" cy="1.5" r="1.3" fill="#5a7488"/><circle cx="2" cy="12.5" r="1.3" fill="#5a7488"/><circle cx="11" cy="12.5" r="1.3" fill="#5a7488"/></svg>
<svg class="r" style="left:811px;top:111px;" width="16" height="17" viewBox="0 0 16 17"><rect x="1" y="1" width="8.5" height="10" fill="#fdf8ea" stroke="#e2d2b0" stroke-width="1" stroke-dasharray="1.5 1"/><rect x="4.5" y="5" width="10" height="11" fill="#fdf8ea" stroke="#e2d2b0" stroke-width="1" stroke-dasharray="1.5 1"/></svg>
<svg class="r" style="left:872px;top:118px;" width="7" height="5" viewBox="0 0 7 5"><path d="M0.5 0.5 L3.5 3.5 L6.5 0.5" fill="none" stroke="#666" stroke-width="1"/></svg>
<svg class="r" style="left:936px;top:74px;" width="26" height="25" viewBox="0 0 26 25"><path d="M2.5 1.8 L23.5 22.5" stroke="#6e9a88" stroke-width="1.5"/></svg>
<svg class="r" style="left:956.2px;top:67.2px;" width="12" height="19" viewBox="0 0 12 19"><g transform="scale(1.17)"><path d="M1.3 3.6 Q1.3 0.8 4.6 0.8 Q8 0.8 8 3.6 Q8 5.4 6 6.5 Q4.7 7.3 4.7 9.5" fill="none" stroke="#3a5173" stroke-width="2.3" stroke-linecap="round"/><circle cx="4.7" cy="13.5" r="1.5" fill="#3a5173"/></g></svg>
<svg class="r" style="left:988px;top:70px;" width="33" height="29" viewBox="0 0 33 29"><path d="M4 3.5 L29.5 25.5" stroke="#c99a5e" stroke-width="6.5" stroke-linecap="butt"/><path d="M5 2.5 L30.5 24.5" stroke="#8a6030" stroke-width="1"/><path d="M8 5 L6.5 6.8 M11.5 8 L10 9.8 M15 11 L13 13 M18.5 14 L17 15.8 M22 17 L20 19 M25.5 20 L24 21.8" stroke="#5a3a18" stroke-width="1.1"/></svg>
<svg class="r" style="left:1009.2px;top:67.2px;" width="12" height="19" viewBox="0 0 12 19"><g transform="scale(1.17)"><path d="M1.3 3.6 Q1.3 0.8 4.6 0.8 Q8 0.8 8 3.6 Q8 5.4 6 6.5 Q4.7 7.3 4.7 9.5" fill="none" stroke="#3a5173" stroke-width="2.3" stroke-linecap="round"/><circle cx="4.7" cy="13.5" r="1.5" fill="#3a5173"/></g></svg>
<svg class="r" style="left:1048px;top:73px;" width="34" height="27" viewBox="0 0 34 27"><path d="M1.5 8 Q6.5 1 13.5 4 Q19 7 23 9" fill="none" stroke="#3e5466" stroke-width="2.1" stroke-linecap="round"/><path d="M1.5 15 Q6.5 8 13.5 11 Q20 14.5 24 15 Q29 15 32 12" fill="none" stroke="#3e5466" stroke-width="2.1" stroke-linecap="round"/><path d="M1.5 22 Q6.5 15 13.5 18 Q20 21.5 24 22 Q29 22 32 19" fill="none" stroke="#3e5466" stroke-width="2.1" stroke-linecap="round"/></svg>
<svg class="r" style="left:1069.7px;top:67.2px;" width="12" height="19" viewBox="0 0 12 19"><g transform="scale(1.17)"><path d="M1.3 3.6 Q1.3 0.8 4.6 0.8 Q8 0.8 8 3.6 Q8 5.4 6 6.5 Q4.7 7.3 4.7 9.5" fill="none" stroke="#3a5173" stroke-width="2.3" stroke-linecap="round"/><circle cx="4.7" cy="13.5" r="1.5" fill="#3a5173"/></g></svg>
<svg class="r" style="left:1111px;top:74px;" width="26" height="26" viewBox="0 0 26 26"><path d="M2 13 C5 6 9 9 13 1.5 L24 9.5 C20 17 16 14 12 24 Z" fill="#e4ecf0" stroke="#8a9298" stroke-width="1"/><path d="M2 13 C5 6 9 9 13 1.5" fill="none" stroke="#5f7484" stroke-width="2"/><g transform="translate(3,2.8)"><path d="M2 13 C5 6 9 9 13 1.5" fill="none" stroke="#cfc27a" stroke-width="2.2"/></g><g transform="translate(5.3,5)"><path d="M2 13 C5 6 9 9 13 1.5" fill="none" stroke="#a9c4a0" stroke-width="1.6"/></g><g transform="translate(7.6,7.2)"><path d="M2 13 C5 6 9 9 13 1.5" fill="none" stroke="#c8d8e4" stroke-width="1.4"/></g></svg>
<svg class="r" style="left:1132.7px;top:67.2px;" width="12" height="19" viewBox="0 0 12 19"><g transform="scale(1.17)"><path d="M1.3 3.6 Q1.3 0.8 4.6 0.8 Q8 0.8 8 3.6 Q8 5.4 6 6.5 Q4.7 7.3 4.7 9.5" fill="none" stroke="#3a5173" stroke-width="2.3" stroke-linecap="round"/><circle cx="4.7" cy="13.5" r="1.5" fill="#3a5173"/></g></svg>
<svg class="r" style="left:1026px;top:120px;" width="7" height="5" viewBox="0 0 7 5"><path d="M0.5 0.5 L3.5 3.5 L6.5 0.5" fill="none" stroke="#666" stroke-width="1"/></svg>
<svg class="r" style="left:1153px;top:120px;" width="7" height="5" viewBox="0 0 7 5"><path d="M0.5 0.5 L3.5 3.5 L6.5 0.5" fill="none" stroke="#666" stroke-width="1"/></svg>
<svg class="r" style="left:1491px;top:120px;" width="7" height="5" viewBox="0 0 7 5"><path d="M0.5 0.5 L3.5 3.5 L6.5 0.5" fill="none" stroke="#666" stroke-width="1"/></svg>
<svg class="r" style="left:1165px;top:70px;" width="15" height="14" viewBox="0 0 15 14"><path d="M2.5 2 L12.5 11.5" stroke="#666" stroke-width="1.6"/><path d="M0.5 0.5 L6.5 1.5 L1.5 6.5 Z" fill="#666"/><circle cx="12.5" cy="11.5" r="1.8" fill="#666"/></svg>
<svg class="r" style="left:1175px;top:68px;" width="8" height="12" viewBox="0 0 8 12"><path d="M1 2.8 Q1 0.6 3.6 0.6 Q6.2 0.6 6.2 2.8 Q6.2 4.2 4.8 5 Q3.7 5.6 3.7 7.2" fill="none" stroke="#4a6282" stroke-width="1.8" stroke-linecap="round"/><circle cx="3.7" cy="9.8" r="1.1" fill="#4a6282"/></svg>
<svg class="r" style="left:1165px;top:90px;" width="16" height="16" viewBox="0 0 16 16"><path d="M1 14.5 H15 M1 14.5 L11 4" fill="none" stroke="#777" stroke-width="1.3"/><path d="M6.5 14.5 Q6.5 10.5 4.2 9.5" fill="none" stroke="#777" stroke-width="1.1"/></svg>
<svg class="r" style="left:1175px;top:90px;" width="8" height="12" viewBox="0 0 8 12"><path d="M1 2.8 Q1 0.6 3.6 0.6 Q6.2 0.6 6.2 2.8 Q6.2 4.2 4.8 5 Q3.7 5.6 3.7 7.2" fill="none" stroke="#4a6282" stroke-width="1.8" stroke-linecap="round"/><circle cx="3.7" cy="9.8" r="1.1" fill="#4a6282"/></svg>
<svg class="r" style="left:1164px;top:112px;" width="17" height="16" viewBox="0 0 17 16"><path d="M1.5 1.5 L15 14.5" stroke="#777" stroke-width="1"/><ellipse cx="5" cy="5" rx="3.2" ry="1.8" transform="rotate(45 5 5)" fill="none" stroke="#777" stroke-width="1.4"/><ellipse cx="11.5" cy="11.5" rx="3.2" ry="1.8" transform="rotate(45 11.5 11.5)" fill="none" stroke="#777" stroke-width="1.4"/></svg>
<svg class="r" style="left:1175px;top:112px;" width="8" height="12" viewBox="0 0 8 12"><path d="M1 2.8 Q1 0.6 3.6 0.6 Q6.2 0.6 6.2 2.8 Q6.2 4.2 4.8 5 Q3.7 5.6 3.7 7.2" fill="none" stroke="#4a6282" stroke-width="1.8" stroke-linecap="round"/><circle cx="3.7" cy="9.8" r="1.1" fill="#4a6282"/></svg>
<svg class="r" style="left:1236px;top:74px;" width="7" height="5" viewBox="0 0 7 5"><path d="M0.5 0.5 L3.5 3.5 L6.5 0.5" fill="none" stroke="#777" stroke-width="1"/></svg>
<svg class="r" style="left:1226px;top:95px;" width="7" height="5" viewBox="0 0 7 5"><path d="M0.5 0.5 L3.5 3.5 L6.5 0.5" fill="none" stroke="#777" stroke-width="1"/></svg>
<svg class="r" style="left:1227px;top:117px;" width="7" height="5" viewBox="0 0 7 5"><path d="M0.5 0.5 L3.5 3.5 L6.5 0.5" fill="none" stroke="#777" stroke-width="1"/></svg>
<svg class="r" style="left:1397px;top:74px;" width="7" height="5" viewBox="0 0 7 5"><path d="M0.5 0.5 L3.5 3.5 L6.5 0.5" fill="none" stroke="#777" stroke-width="1"/></svg>
<svg class="r" style="left:1327px;top:96px;" width="7" height="5" viewBox="0 0 7 5"><path d="M0.5 0.5 L3.5 3.5 L6.5 0.5" fill="none" stroke="#777" stroke-width="1"/></svg>
<svg class="r" style="left:1247px;top:71px;" width="14" height="14" viewBox="0 0 14 14"><path d="M1 5 L6 2 L12 4 V10 L7 13 L1 10.5 Z" fill="#d4a660"/><path d="M1 5 L6 2 L12 4 L7 6.5 Z" fill="#e8c080"/><path d="M3 12 Q6 8 10 11" fill="none" stroke="#6ea08a" stroke-width="1.4"/></svg>
<svg class="r" style="left:1258px;top:68px;" width="8" height="12" viewBox="0 0 8 12"><path d="M1 2.8 Q1 0.6 3.6 0.6 Q6.2 0.6 6.2 2.8 Q6.2 4.2 4.8 5 Q3.7 5.6 3.7 7.2" fill="none" stroke="#4a6282" stroke-width="1.8" stroke-linecap="round"/><circle cx="3.7" cy="9.8" r="1.1" fill="#4a6282"/></svg>
<svg class="r" style="left:1247px;top:96px;" width="14" height="11" viewBox="0 0 14 11"><rect x="1" y="1" width="11" height="9" fill="#fff" stroke="#6a6a6a" stroke-width="1.4"/><path d="M6.5 3 V8 M4 5.5 H9" stroke="#222" stroke-width="1.5"/></svg>
<svg class="r" style="left:1257px;top:90px;" width="8" height="12" viewBox="0 0 8 12"><path d="M1 2.8 Q1 0.6 3.6 0.6 Q6.2 0.6 6.2 2.8 Q6.2 4.2 4.8 5 Q3.7 5.6 3.7 7.2" fill="none" stroke="#4a6282" stroke-width="1.8" stroke-linecap="round"/><circle cx="3.7" cy="9.8" r="1.1" fill="#4a6282"/></svg>
<svg class="r" style="left:1247px;top:112px;" width="17" height="15" viewBox="0 0 17 15"><rect x="1.2" y="1.2" width="14" height="12.5" fill="#fff" stroke="#59708a" stroke-width="1.4"/><path d="M11.5 3.5 H5 L8.5 7.5 L5 11.5 H11.5" fill="none" stroke="#555" stroke-width="1.1"/></svg>
<svg class="r" style="left:1441px;top:67px;" width="33" height="33" viewBox="0 0 33 33"><polygon points="21.50,21.50 21.31,23.45 18.15,24.26 17.49,25.50 18.57,28.57 17.06,29.81 14.26,28.15 12.90,28.56 11.50,31.50 9.55,31.31 8.74,28.15 7.50,27.49 4.43,28.57 3.19,27.06 4.85,24.26 4.44,22.90 1.50,21.50 1.69,19.55 4.85,18.74 5.51,17.50 4.43,14.43 5.94,13.19 8.74,14.85 10.10,14.44 11.50,11.50 13.45,11.69 14.26,14.85 15.50,15.51 18.57,14.43 19.81,15.94 18.15,18.74 18.56,20.10" fill="#7aaa96"/><circle cx="11.5" cy="21.5" r="4.3" fill="#fff"/><polygon points="30.00,9.50 29.85,11.06 27.32,11.70 26.79,12.70 27.66,15.16 26.44,16.15 24.20,14.82 23.12,15.15 22.00,17.50 20.44,17.35 19.80,14.82 18.80,14.29 16.34,15.16 15.35,13.94 16.68,11.70 16.35,10.62 14.00,9.50 14.15,7.94 16.68,7.30 17.21,6.30 16.34,3.84 17.56,2.85 19.80,4.18 20.88,3.85 22.00,1.50 23.56,1.65 24.20,4.18 25.20,4.71 27.66,3.84 28.65,5.06 27.32,7.30 27.65,8.38" fill="#4176b0"/><circle cx="22" cy="9.5" r="3.4" fill="#fff"/></svg>
<svg class="r" style="left:1517px;top:68px;" width="32" height="31" viewBox="0 0 32 31"><path d="M5.5 4 Q5.5 1 8.5 1 H28 Q30.5 1 30.5 3.5 Q30.5 5 28.5 5 H26 V26 Q26 29.5 22.5 29.5 H3 Q0.8 29.5 0.8 27.5 Q0.8 25.5 3.5 25.5 H5.5 Z" fill="#fff" stroke="#8a8a8a" stroke-width="1.4"/><path d="M9 1.5 Q11 3 11 5 H26" fill="none" stroke="#8a8a8a" stroke-width="1.2"/><text x="15.8" y="19.5" font-family="Liberation Sans" font-size="11" font-weight="bold" fill="#5e8e7c" text-anchor="middle">C#</text></svg>
<svg class="r" style="left:1582px;top:68px;" width="34" height="31" viewBox="0 0 34 31"><circle cx="22" cy="11" r="8.5" fill="#fff" stroke="#555" stroke-width="1.9"/><path d="M15.5 18 L5 27.5" stroke="#222" stroke-width="4.2" stroke-linecap="round"/><path d="M1 6.5 H10 M1 15 H10.5 M1 23.5 H6" stroke="#4a7ab0" stroke-width="2.4"/></svg>
<svg class="r" style="left:315px;top:169px;" width="10" height="7" viewBox="0 0 10 7"><path d="M0.5 0.5 H9.5 L5 6 Z" fill="#555"/></svg>
<svg class="r" style="left:334px;top:165.5px;" width="9" height="12" viewBox="0 0 9 12"><path d="M2 0.8 H7 M2.5 0.8 V7 M6.5 0.8 V7 M0.5 7 H8.5 M4.5 7 V11.5" stroke="#555" stroke-width="1.2" fill="none"/></svg>
<svg class="r" style="left:351px;top:166px;" width="9" height="9" viewBox="0 0 9 9"><path d="M0.8 0.8 L8.2 8.2 M8.2 0.8 L0.8 8.2" stroke="#444" stroke-width="1.3"/></svg>
<svg class="r" style="left:3px;top:188px;opacity:0.55" width="18" height="18" viewBox="0 0 18 18"><path d="M1 1 L9 6 L1 11 Z" fill="#4f9a7c"/><path d="M10 6.5 L10 16 L12.3 13.8 L14.3 17.5 L15.8 16.8 L13.8 13 L16.8 13 Z" fill="#333"/></svg>
<svg class="r" style="left:25px;top:188px;opacity:0.55" width="18" height="18" viewBox="0 0 18 18"><path d="M1.5 1.5 L8 8 M8 1.5 L1.5 8" stroke="#e06050" stroke-width="1.6"/><path d="M10.5 6.5 L10.5 16 L12.8 13.8 L14.8 17.5 L16.3 16.8 L14.3 13 L17.3 13 Z" fill="#333"/></svg>
<div class="r" style="left:49px;top:185px;width:1px;height:22px;background:#ececec"></div>
<svg class="r" style="left:56px;top:188px;opacity:0.55" width="17" height="17" viewBox="0 0 17 17"><rect x="0.5" y="0.5" width="6" height="3.5" fill="#9aa4aa"/><rect x="2" y="4" width="3" height="10" fill="#e8c860"/><path d="M8 7 L16 11 L8 15 Z" fill="#4f9a7c"/></svg>
<svg class="r" style="left:78px;top:188px;opacity:0.55" width="17" height="17" viewBox="0 0 17 17"><rect x="0.5" y="0.5" width="6" height="3.5" fill="#9aa4aa"/><rect x="2" y="4" width="3" height="10" fill="#e8c860"/><path d="M8 8 L14.5 14.5 M14.5 8 L8 14.5" stroke="#e06050" stroke-width="1.5"/></svg>
<svg class="r" style="left:100px;top:188px;opacity:0.55" width="18" height="17" viewBox="0 0 18 17"><rect x="0.5" y="0.5" width="5" height="3" fill="#9aa4aa"/><rect x="2" y="3.5" width="2" height="8" fill="#e8c860"/><rect x="11" y="6.5" width="5" height="3" fill="#9aa4aa"/><rect x="12.5" y="9.5" width="2" height="7" fill="#e8c860"/><path d="M6 3.5 H12 M6 13.5 H11" stroke="#e07050" stroke-width="1.3"/><path d="M6.5 1.5 L6.5 5.5 L4.5 3.5 Z M11 11.5 L11 15.5 L13 13.5 Z" fill="#e07050"/></svg>
<svg class="r" style="left:123px;top:195px;opacity:0.55" width="5" height="3" viewBox="0 0 5 3"><path d="M0 0 H4.5 L2.25 2.6 Z" fill="#888"/></svg>
<div class="r" style="left:135px;top:185px;width:1px;height:22px;background:#ececec"></div>
<svg class="r" style="left:143px;top:188px;opacity:0.55" width="16" height="16" viewBox="0 0 16 16"><rect x="0" y="0.5" width="15.5" height="15.5" fill="#5d7a96"/><path d="M0 5 Q4 1 8 4 Q12 7 15.5 3.5 M0 9 Q4 5 8 8 Q12 11 15.5 7.5 M0 13 Q4 9 8 12 Q12 15 15.5 11.5" fill="none" stroke="#e8eef4" stroke-width="1.2"/></svg>
<svg class="r" style="left:165px;top:188px;opacity:0.55" width="18" height="18" viewBox="0 0 18 18"><rect x="0.5" y="0.5" width="8" height="9" rx="2" fill="#d4b060"/><rect x="7" y="7" width="8" height="10" fill="#fff" stroke="#999" stroke-width="1"/><path d="M9 12 L11 14 L14 9.5" fill="none" stroke="#7aa090" stroke-width="1"/></svg>
<svg class="r" style="left:187px;top:195px;opacity:0.55" width="5" height="3" viewBox="0 0 5 3"><path d="M0 0 H4.5 L2.25 2.6 Z" fill="#888"/></svg>
<svg class="r" style="left:199px;top:188px;opacity:0.55" width="17" height="17" viewBox="0 0 17 17"><rect x="0" y="0.5" width="15.5" height="15.5" fill="#5d7a96"/><path d="M0 5 Q4 1 8 4 Q12 7 15.5 3.5 M0 9 Q4 5 8 8 Q12 11 15.5 7.5 M0 13 Q4 9 8 12" fill="none" stroke="#e8eef4" stroke-width="1.2"/><circle cx="12.5" cy="13" r="3.2" fill="#fff" stroke="#d4a040" stroke-width="1.4"/></svg>
<div class="t" style="left:222.50px;top:191.34px;font-size:11px;color:#c2c8ce;font-weight:normal;transform:scaleX(0.8519);">G1</div>
<svg class="r" style="left:243px;top:188px;opacity:0.55" width="17" height="18" viewBox="0 0 17 18"><rect x="0.5" y="0.5" width="5" height="3" fill="#9aa4aa"/><rect x="2" y="3.5" width="2.2" height="12" fill="#e8c860"/><path d="M4.5 11 H13" stroke="#e07050" stroke-width="1.3"/><path d="M12.5 8.5 L16 11 L12.5 13.5 Z" fill="#e07050"/></svg>
<div class="r" style="left:266px;top:185px;width:1px;height:22px;background:#ececec"></div>
<svg class="r" style="left:274px;top:188px;opacity:0.55" width="15" height="17" viewBox="0 0 15 17"><path d="M2 15.5 L13 3" stroke="#e06050" stroke-width="2.3" stroke-linecap="round"/><path d="M1 5 Q3 1 6 3.5 Q9 1 12 2" fill="none" stroke="#e0b030" stroke-width="1.4"/><circle cx="4" cy="5" r="1.8" fill="none" stroke="#e0b030" stroke-width="1.2"/></svg>
<div class="r" style="left:296px;top:185px;width:1px;height:22px;background:#ececec"></div>
<svg class="r" style="left:302px;top:188px;opacity:0.55" width="17" height="17" viewBox="0 0 17 17"><circle cx="8.2" cy="8.5" r="8" fill="#bcd0e6"/><circle cx="8.2" cy="8.5" r="6.4" fill="#5a86bc"/><text x="8.2" y="12.5" font-family="Liberation Sans" font-weight="bold" font-size="11" fill="#fff" text-anchor="middle">?</text></svg>
<svg class="r" style="left:6px;top:212px;opacity:0.55" width="13" height="17" viewBox="0 0 13 17"><path d="M3 7 V4.5 Q3 1 6.5 1 Q10 1 10 4.5 V7" fill="none" stroke="#b8a070" stroke-width="1.8"/><rect x="1" y="7" width="11" height="9.5" rx="1" fill="#b8a070"/><circle cx="6.5" cy="11.5" r="1.3" fill="#fff"/></svg>
<svg class="r" style="left:25px;top:212px;opacity:0.55" width="18" height="15" viewBox="0 0 18 15"><path d="M1 4 Q5 0 9 3 Q13 6 17 2.5 M1 8.5 Q5 4.5 9 7.5 Q13 10.5 17 7 M1 13 Q5 9 9 12 Q13 15 17 11.5" fill="none" stroke="#8090a0" stroke-width="1.3"/></svg>
<svg class="r" style="left:50px;top:212px;opacity:0.55" width="12" height="17" viewBox="0 0 12 17"><path d="M1 16 V6 Q1 1 6 1 Q11 1 11 6 V16 L9 14.5 L7.5 16 L6 14.5 L4.5 16 L3 14.5 Z" fill="#8a8a8a"/><circle cx="4" cy="6" r="1" fill="#333"/><circle cx="8" cy="6" r="1" fill="#333"/><circle cx="6" cy="9.5" r="1" fill="#333"/></svg>
<div class="r" style="left:71px;top:208px;width:1px;height:23px;background:#ececec"></div>
<svg class="r" style="left:79px;top:215px;opacity:0.55" width="13" height="9" viewBox="0 0 13 9"><path d="M0.5 0.5 H12 L6.25 8.5 Z" fill="#e06a5a"/></svg>
<svg class="r" style="left:101px;top:215px;opacity:0.55" width="13" height="9" viewBox="0 0 13 9"><path d="M0.5 8.5 H12 L6.25 0.5 Z" fill="#e06a5a"/></svg>
<svg class="r" style="left:123px;top:214px;opacity:0.55" width="15" height="13" viewBox="0 0 15 13"><path d="M1.5 1.5 H12 M1.5 1.5 V9.5 H10" fill="none" stroke="#e07060" stroke-width="1.6"/><path d="M10 7 L14 9.5 L10 12 Z" fill="#e07060"/></svg>
<svg class="r" style="left:144px;top:212px;opacity:0.55" width="15" height="17" viewBox="0 0 15 17"><path d="M7.5 0.5 L13 6 H2 Z M7.5 16.5 L13 11 H2 Z" fill="#e06a5a"/><rect x="0.5" y="7.8" width="14" height="1.6" fill="#e06a5a"/></svg>
<div class="r" style="left:167px;top:208px;width:1px;height:23px;background:#ececec"></div>
<div class="r" style="left:172px;top:210px;width:20px;height:20px;background:#b9cde6"></div>
<svg class="r" style="left:173px;top:212px;opacity:0.75" width="18" height="16" viewBox="0 0 18 16"><path d="M1 5 Q5 1 9 4 Q12 6 15 3" fill="none" stroke="#7890a8" stroke-width="1.2"/><path d="M9 6 L9 15 L11 13 L13 16.5 L14.3 15.8 L12.5 12.3 L15.3 12.3 Z" fill="#333"/></svg>
<div class="r" style="left:194px;top:210px;width:20px;height:20px;background:#b9cde6"></div>
<svg class="r" style="left:196px;top:212px;opacity:0.75" width="17" height="16" viewBox="0 0 17 16"><path d="M4 4 Q8 0 12 4" fill="none" stroke="#a0a8c8" stroke-width="1"/><rect x="5.5" y="6.5" width="9" height="8" fill="none" stroke="#b070b0" stroke-width="1.2"/></svg>
<div class="r" style="left:219px;top:210px;width:31px;height:20px;border:1px solid #f0f0f0;box-sizing:border-box"></div>
<svg class="r" style="left:220px;top:213px;opacity:0.55" width="16" height="15" viewBox="0 0 16 15"><rect x="0.5" y="0.5" width="14.5" height="13.5" fill="#fff" stroke="#8a96a0" stroke-width="1"/><rect x="2.5" y="3" width="2" height="1.5" fill="#d05050"/><rect x="2.5" y="6.3" width="2" height="1.5" fill="#5080a0"/><rect x="2.5" y="9.6" width="2" height="1.5" fill="#50a080"/><circle cx="10" cy="7.5" r="2.8" fill="none" stroke="#e0a030" stroke-width="1.4"/></svg>
<svg class="r" style="left:241px;top:218px;opacity:0.55" width="5" height="3" viewBox="0 0 5 3"><path d="M0 0 H4.5 L2.25 2.6 Z" fill="#888"/></svg>
<div class="r" style="left:253px;top:208px;width:1px;height:23px;background:#ececec"></div>
<svg class="r" style="left:260px;top:212px;opacity:0.55" width="16" height="17" viewBox="0 0 16 17"><rect x="1" y="0.5" width="13" height="3" fill="#5a6a7a"/><path d="M2 4 L7 9 L2 15.5 H14 L9 9 L14 4 Z" fill="#b8c4d0"/><path d="M2 15.5 L5.5 10 L8 13 L10.5 9 L14 15.5 Z" fill="#3a5a8a"/></svg>
<svg class="r" style="left:282px;top:212px;opacity:0.55" width="17" height="17" viewBox="0 0 17 17"><circle cx="6.5" cy="6.5" r="5.5" fill="#fff" stroke="#222" stroke-width="1.3"/><path d="M6.5 1 A5.5 5.5 0 0 1 12 6.5 H6.5 Z M6.5 12 A5.5 5.5 0 0 1 1 6.5 H6.5 Z" fill="#222"/><path d="M8 16 L15.5 4.5" stroke="#e0c040" stroke-width="1.8"/></svg>
<div class="r" style="left:885px;top:161px;width:518px;height:34px;background:#cdd1d6;border-radius:17px"></div>
<div class="r" style="left:1086px;top:163px;width:1px;height:30px;background:#aab0b8"></div>
<div class="r" style="left:1297px;top:161px;width:22px;height:34px;background:#b4c6dc;border:1px solid #7e9fc6;box-sizing:border-box"></div>
<div class="r" style="left:1142px;top:156px;width:1px;height:838px;background:rgba(255,240,240,0.2)"></div>
<div class="r" style="left:1145px;top:156px;width:1px;height:838px;background:rgba(255,240,240,0.2)"></div>
<div class="r" style="left:1143px;top:156px;width:2px;height:838px;background:rgba(48,13,31,0.3)"></div>
<svg class="r" style="left:906px;top:169px;" width="14" height="18" viewBox="0 0 14 18"><path d="M3 8 V5 Q3 1.5 7 1.5 Q10.5 1.5 10.5 4.5" fill="none" stroke="#b0b4b8" stroke-width="1.8"/><rect x="1" y="8" width="12" height="9.5" rx="1" fill="#b8bcc0"/></svg>
<svg class="r" style="left:929px;top:170px;" width="16" height="17" viewBox="0 0 16 17"><rect x="0.5" y="0.5" width="14" height="15" fill="none" stroke="#444" stroke-width="1" stroke-dasharray="1.5 1.2"/><path d="M4 2 L4 14 L6.8 11.5 L9.2 16 L11 15 L8.7 10.6 L12.5 10.6 Z" fill="#333"/></svg>
<svg class="r" style="left:1031px;top:177px;" width="6" height="4" viewBox="0 0 6 4"><path d="M0 0 H5 L2.5 3 Z" fill="#666"/></svg>
<svg class="r" style="left:1044px;top:168px;" width="18" height="19" viewBox="0 0 18 19"><path d="M9 1 V8 M5.5 4.5 H12.5" stroke="#4a7fbf" stroke-width="2"/><text x="9" y="17.5" font-family="Liberation Sans" font-size="8.5" font-weight="bold" fill="#555" text-anchor="middle">X,Y,Z</text></svg>
<svg class="r" style="left:1067px;top:168px;" width="17" height="19" viewBox="0 0 17 19"><path d="M4 1 V7 M1 4 H7" stroke="#4a6a9a" stroke-width="1.5"/><polygon points="16.00,12.00 15.88,13.17 13.99,13.65 13.59,14.40 14.24,16.24 13.33,16.99 11.65,15.99 10.84,16.24 10.00,18.00 8.83,17.88 8.35,15.99 7.60,15.59 5.76,16.24 5.01,15.33 6.01,13.65 5.76,12.84 4.00,12.00 4.12,10.83 6.01,10.35 6.41,9.60 5.76,7.76 6.67,7.01 8.35,8.01 9.16,7.76 10.00,6.00 11.17,6.12 11.65,8.01 12.40,8.41 14.24,7.76 14.99,8.67 13.99,10.35 14.24,11.16" fill="#c8a860"/><circle cx="10" cy="12" r="2.4" fill="#fff"/></svg>
<svg class="r" style="left:1092px;top:170px;opacity:0.6" width="12" height="16" viewBox="0 0 12 16"><path d="M1 1 L1 13 L4 10.5 L6.5 15 L8.3 14 L6 9.6 L10 9.6 Z" fill="#999"/></svg>
<svg class="r" style="left:1112px;top:170px;opacity:0.6" width="17" height="17" viewBox="0 0 17 17"><path d="M2 4 L8 1.5 L14 4 V11 L8 14 L2 11 Z" fill="#c0c4c8" stroke="#a8acb0" stroke-width="1"/><circle cx="12" cy="12" r="3.5" fill="none" stroke="#b0b4b8" stroke-width="1.2"/></svg>
<svg class="r" style="left:1135px;top:170px;opacity:0.6" width="16" height="17" viewBox="0 0 16 17"><path d="M2 4 L8 1.5 L14 4 V12 L8 15 L2 12 Z" fill="#c0c4c8" stroke="#a8acb0" stroke-width="1"/></svg>
<svg class="r" style="left:1157px;top:170px;opacity:0.6" width="16" height="17" viewBox="0 0 16 17"><path d="M2 4 L8 1.5 L14 4 V12 L8 15 L2 12 Z" fill="#c4c8cc"/><path d="M8 6 V15 L14 12 V4 Z" fill="#b0b4b8"/></svg>
<svg class="r" style="left:1179px;top:170px;opacity:0.6" width="16" height="17" viewBox="0 0 16 17"><path d="M2 4 L8 1.5 L14 4 V12 L8 15 L2 12 Z" fill="#c4c8cc"/><path d="M8 6 V15 L14 12 V4 Z" fill="#b0b4b8"/></svg>
<svg class="r" style="left:1200px;top:169px;" width="17" height="18" viewBox="0 0 17 18"><path d="M8 2 Q1 3 1 9 Q1 15 8 16 Z" fill="#e6c078"/><path d="M9 1 L15.5 3 V14 L9 16 Z" fill="#6a90c0"/><path d="M10 15 L14 13 V16.5 H10 Z" fill="#222"/></svg>
<svg class="r" style="left:1225px;top:170px;" width="16" height="17" viewBox="0 0 16 17"><rect x="0.5" y="0.5" width="14" height="15" fill="none" stroke="#444" stroke-width="1" stroke-dasharray="1.5 1.2"/><path d="M4 2 L4 14 L6.8 11.5 L9.2 16 L11 15 L8.7 10.6 L12.5 10.6 Z" fill="#333"/></svg>
<svg class="r" style="left:1247px;top:177px;" width="6" height="4" viewBox="0 0 6 4"><path d="M0 0 H5 L2.5 3 Z" fill="#666"/></svg>
<svg class="r" style="left:1263px;top:170px;" width="16" height="16" viewBox="0 0 16 16"><rect x="1.5" y="1.5" width="13" height="13" fill="#e8c890" stroke="#555" stroke-width="1.3" stroke-dasharray="1.6 1.6"/></svg>
<svg class="r" style="left:1287px;top:177px;" width="6" height="4" viewBox="0 0 6 4"><path d="M0 0 H5 L2.5 3 Z" fill="#666"/></svg>
<svg class="r" style="left:1301px;top:170px;opacity:0.6" width="16" height="17" viewBox="0 0 16 17"><circle cx="6" cy="6" r="4.5" fill="none" stroke="#a8b8c8" stroke-width="1.2"/><circle cx="11" cy="11.5" r="4" fill="none" stroke="#c0ccd8" stroke-width="1.2"/></svg>
<svg class="r" style="left:1321px;top:169px;" width="18" height="18" viewBox="0 0 18 18"><path d="M1 1 L1 11 L3.5 9 L5.5 12.5 L7 11.7 L5.2 8.5 L8.5 8.5 Z" fill="#222"/><rect x="8" y="8" width="8.5" height="9" fill="#e8f4e8" stroke="#7aa890" stroke-width="1"/><path d="M9.5 12.5 L11.5 14.5 L15 10" fill="none" stroke="#4a9a6a" stroke-width="1.3"/></svg>
<svg class="r" style="left:1343px;top:169px;" width="17" height="18" viewBox="0 0 17 18"><path d="M4 4 A6.5 6.5 0 1 1 4 14" fill="none" stroke="#333" stroke-width="2.2"/><path d="M1 6 L1 16 L3.5 14 L5.5 17.5 L7 16.7 L5.2 13.5 L8.5 13.5 Z" fill="#222"/></svg>
<svg class="r" style="left:1366px;top:170px;opacity:0.6" width="15" height="16" viewBox="0 0 15 16"><path d="M1 1 L1 11 L3.5 9 L5.5 12.5 L7 11.7 L5.2 8.5 L8.5 8.5 Z" fill="#9a9ea2"/><path d="M5 14 L13 5" stroke="#a8acb0" stroke-width="1.3"/></svg>
<svg class="r" style="left:1880px;top:248px;" width="33" height="33" viewBox="0 0 33 33"><circle cx="16.5" cy="16.5" r="16" fill="rgba(240,241,243,0.62)" stroke="rgba(90,90,90,0.2)" stroke-width="1.1"/><g opacity="0.8"><path d="M11 16.5 H22 M16.5 11 V22" stroke="#4a80b8" stroke-width="3"/></g><path d="M5.5 27.5 L27.5 5.5" stroke="#b4b0a8" stroke-width="0.9"/></svg>
<svg class="r" style="left:1880px;top:289px;" width="33" height="33" viewBox="0 0 33 33"><circle cx="16.5" cy="16.5" r="16" fill="rgba(240,241,243,0.62)" stroke="rgba(90,90,90,0.2)" stroke-width="1.1"/><g opacity="0.8"><path d="M10 11 L14 15 M12 9 V13 M10 12 H14 M17 18 L21 22 M19 16 V24 M17 20 H21" stroke="#6a8ab0" stroke-width="1.3"/><path d="M13 14 L19 20" stroke="#b0a080" stroke-width="1"/></g><path d="M5.5 27.5 L27.5 5.5" stroke="#b4b0a8" stroke-width="0.9"/></svg>
<svg class="r" style="left:1880px;top:330px;" width="33" height="33" viewBox="0 0 33 33"><circle cx="16.5" cy="16.5" r="16" fill="rgba(240,241,243,0.62)" stroke="rgba(90,90,90,0.2)" stroke-width="1.1"/><g opacity="0.8"><circle cx="16.5" cy="16.5" r="5.8" fill="none" stroke="#5a8ac0" stroke-width="1.8"/></g><path d="M5.5 27.5 L27.5 5.5" stroke="#b4b0a8" stroke-width="0.9"/></svg>
<svg class="r" style="left:1880px;top:371px;" width="33" height="33" viewBox="0 0 33 33"><circle cx="16.5" cy="16.5" r="16" fill="rgba(240,241,243,0.62)" stroke="rgba(90,90,90,0.2)" stroke-width="1.1"/><g opacity="0.8"><path d="M12 10 Q16 9 16.5 16.5 Q17 24 21 23" fill="none" stroke="#5a7a90" stroke-width="1.6"/></g><path d="M5.5 27.5 L27.5 5.5" stroke="#b4b0a8" stroke-width="0.9"/></svg>
<svg class="r" style="left:1880px;top:412px;" width="33" height="33" viewBox="0 0 33 33"><circle cx="16.5" cy="16.5" r="16" fill="rgba(240,241,243,0.62)" stroke="rgba(90,90,90,0.2)" stroke-width="1.1"/><g opacity="0.8"><path d="M11 13 L16.5 10 L22 13 V20 L16.5 23 L11 20 Z" fill="none" stroke="#6a8aa8" stroke-width="1.3"/><path d="M11 13 L22 20 M22 13 L11 20 M16.5 10 V23" stroke="#7a98b4" stroke-width="1"/></g><path d="M5.5 27.5 L27.5 5.5" stroke="#b4b0a8" stroke-width="0.9"/></svg>
<svg class="r" style="left:1880px;top:453px;" width="33" height="33" viewBox="0 0 33 33"><circle cx="16.5" cy="16.5" r="16" fill="rgba(240,241,243,0.62)" stroke="rgba(90,90,90,0.2)" stroke-width="1.1"/><g opacity="0.8"><path d="M11 12 V21 M22 12 V21 M11 16.5 H22" stroke="#5a88c0" stroke-width="1.8"/><path d="M13 14.5 L11 16.5 L13 18.5 M20 14.5 L22 16.5 L20 18.5" fill="none" stroke="#5a88c0" stroke-width="1.3"/></g><path d="M5.5 27.5 L27.5 5.5" stroke="#b4b0a8" stroke-width="0.9"/></svg>
<svg class="r" style="left:1880px;top:494px;" width="33" height="33" viewBox="0 0 33 33"><circle cx="16.5" cy="16.5" r="16" fill="rgba(240,241,243,0.62)" stroke="rgba(90,90,90,0.2)" stroke-width="1.1"/><g opacity="0.8"><path d="M11 13 L15 10 L23 18 L19 22 Z" fill="#d0b070"/><path d="M13 14 L19 20" stroke="#a08040" stroke-width="1"/></g><path d="M5.5 27.5 L27.5 5.5" stroke="#b4b0a8" stroke-width="0.9"/></svg>
<svg class="r" style="left:1880px;top:535px;" width="33" height="33" viewBox="0 0 33 33"><circle cx="16.5" cy="16.5" r="16" fill="rgba(240,241,243,0.62)" stroke="rgba(90,90,90,0.2)" stroke-width="1.1"/><g opacity="0.8"><path d="M11 13 L16.5 10 L22 13 V20 L16.5 23 L11 20 Z" fill="#9ab4c8" stroke="#6a8aa8" stroke-width="1"/><path d="M11 16 H22 M16.5 10 V23" stroke="#dde" stroke-width="0.8"/></g><path d="M5.5 27.5 L27.5 5.5" stroke="#b4b0a8" stroke-width="0.9"/></svg>
<svg class="r" style="left:1880px;top:576px;" width="33" height="33" viewBox="0 0 33 33"><circle cx="16.5" cy="16.5" r="16" fill="rgba(240,241,243,0.62)" stroke="rgba(90,90,90,0.2)" stroke-width="1.1"/><g opacity="0.8"><path d="M11 13 L16.5 10.5 L22 13 V20.5 L16.5 23 L11 20.5 Z" fill="#d8bc80"/><path d="M16.5 15 V23 L22 20.5 V13 Z" fill="#c0a060"/><path d="M11 13 L16.5 15 L22 13 L16.5 10.5 Z" fill="#e8d0a0"/></g><path d="M5.5 27.5 L27.5 5.5" stroke="#b4b0a8" stroke-width="0.9"/></svg>
<svg class="r" style="left:1880px;top:617px;" width="33" height="33" viewBox="0 0 33 33"><circle cx="16.5" cy="16.5" r="16" fill="rgba(240,241,243,0.62)" stroke="rgba(90,90,90,0.2)" stroke-width="1.1"/><g opacity="0.8"><rect x="17" y="9.5" width="7" height="7" fill="#9a80c0"/><rect x="10" y="16" width="7.5" height="7.5" fill="#e0c890" stroke="#c0a060" stroke-width="0.8"/></g></svg>
<svg class="r" style="left:1880px;top:658px;" width="33" height="33" viewBox="0 0 33 33"><circle cx="16.5" cy="16.5" r="16" fill="rgba(240,241,243,0.62)" stroke="rgba(90,90,90,0.2)" stroke-width="1.1"/><g opacity="0.8"><rect x="17" y="9.5" width="7" height="7" fill="#e0c890" stroke="#c0a060" stroke-width="0.8"/><rect x="10" y="16" width="7.5" height="7.5" fill="#e03a40"/></g></svg>
<svg class="r" style="left:1880px;top:699px;" width="33" height="33" viewBox="0 0 33 33"><circle cx="16.5" cy="16.5" r="16" fill="rgba(240,241,243,0.62)" stroke="rgba(90,90,90,0.2)" stroke-width="1.1"/><g opacity="0.8"><path d="M15 11 V22 M18 11 V22" stroke="#5a7a98" stroke-width="1"/><path d="M12.5 12 H14 M12.5 15.5 H14 M12.5 19 H14" stroke="#5a7a98" stroke-width="1.6"/><path d="M18 11 Q21 12.5 18 14" fill="none" stroke="#888" stroke-width="0.9"/></g></svg>
<svg class="r" style="left:1880px;top:740px;" width="33" height="33" viewBox="0 0 33 33"><circle cx="16.5" cy="16.5" r="16" fill="rgba(240,241,243,0.62)" stroke="rgba(90,90,90,0.2)" stroke-width="1.1"/><g opacity="0.8"><circle cx="13" cy="13" r="1.2" fill="#c06060"/><circle cx="16.5" cy="13" r="1.2" fill="#6a9a6a"/><circle cx="20" cy="13" r="1.2" fill="#333"/><circle cx="13" cy="17" r="1.2" fill="#5a7ab0"/><circle cx="16.5" cy="17" r="1.2" fill="#c08040"/><circle cx="20" cy="17" r="1.2" fill="#222"/><circle cx="16.5" cy="21" r="1.2" fill="#b060b0"/></g><path d="M5.5 27.5 L27.5 5.5" stroke="#b4b0a8" stroke-width="0.9"/></svg>
<svg class="r" style="left:1880px;top:781px;" width="33" height="33" viewBox="0 0 33 33"><circle cx="16.5" cy="16.5" r="16" fill="rgba(240,241,243,0.62)" stroke="rgba(90,90,90,0.2)" stroke-width="1.1"/><g opacity="0.8"><path d="M10 14 L16.5 11 L23 14 L16.5 17 Z" fill="#4a80c0"/><path d="M10 17.5 L16.5 14.5 L23 17.5 L16.5 20.5 Z" fill="#5a90d0"/><path d="M10 21 L16.5 18 L23 21 L16.5 24 Z" fill="#4a80c0"/></g><path d="M5.5 27.5 L27.5 5.5" stroke="#b4b0a8" stroke-width="0.9"/></svg>
<svg class="r" style="left:1880px;top:822px;" width="33" height="33" viewBox="0 0 33 33"><circle cx="16.5" cy="16.5" r="16" fill="rgba(240,241,243,0.62)" stroke="rgba(90,90,90,0.2)" stroke-width="1.1"/><g opacity="0.8"><polygon points="22.70,16.50 22.58,17.71 20.62,18.21 20.21,18.98 20.88,20.88 19.94,21.66 18.21,20.62 17.37,20.88 16.50,22.70 15.29,22.58 14.79,20.62 14.02,20.21 12.12,20.88 11.34,19.94 12.38,18.21 12.12,17.37 10.30,16.50 10.42,15.29 12.38,14.79 12.79,14.02 12.12,12.12 13.06,11.34 14.79,12.38 15.63,12.12 16.50,10.30 17.71,10.42 18.21,12.38 18.98,12.79 20.88,12.12 21.66,13.06 20.62,14.79 20.88,15.63" fill="#d0b060"/><circle cx="16.5" cy="16.5" r="2.6" fill="#fff"/></g><path d="M5.5 27.5 L27.5 5.5" stroke="#b4b0a8" stroke-width="0.9"/></svg>
<svg class="r" style="left:1880px;top:863px;" width="33" height="33" viewBox="0 0 33 33"><circle cx="16.5" cy="16.5" r="16" fill="rgba(240,241,243,0.62)" stroke="rgba(90,90,90,0.2)" stroke-width="1.1"/><g opacity="0.8"><circle cx="16.5" cy="16.5" r="6.5" fill="none" stroke="#e05050" stroke-width="1.8"/><path d="M12 12 L21 21" stroke="#e05050" stroke-width="1.8"/></g><path d="M5.5 27.5 L27.5 5.5" stroke="#b4b0a8" stroke-width="0.9"/></svg>
<div class="r" style="left:1144px;top:540px;width:35px;height:35px;background:#8088bb"></div>
<svg class="r" style="left:1134px;top:526px;" width="60" height="60" viewBox="0 0 60 60"><path d="M10.5 49 V16" stroke="#1c7a2a" stroke-width="2.2"/><path d="M7 26 L10.5 14 L14 26 Z" fill="#1c7a2a"/><path d="M8 4.5 L10.5 8 L13 4.5 M10.5 8 V11" fill="none" stroke="#8ad08a" stroke-width="1"/><path d="M10 49 H42" stroke="#b01818" stroke-width="2.2"/><path d="M33 45.5 L45 49 L33 52.5 Z" fill="#a01010"/><path d="M48.5 45.5 L54 52.5 M54 45.5 L48.5 52.5" stroke="#f06060" stroke-width="1"/><circle cx="10.5" cy="49" r="2.8" fill="#2020c0"/></svg>
<svg class="r" style="left:440px;top:845px;" width="80" height="72" viewBox="0 0 80 72"><rect x="14" y="22" width="43" height="42" fill="#c4c4c4"/><rect x="14" y="22" width="7" height="7" rx="2" fill="#a2a2a2"/><rect x="50" y="22" width="7" height="7" rx="2" fill="#a2a2a2"/><rect x="14" y="57" width="7" height="7" rx="2" fill="#a2a2a2"/><rect x="50" y="57" width="7" height="7" rx="2" fill="#a2a2a2"/><rect x="24" y="22" width="23" height="5" fill="#a8a8a8"/><rect x="24" y="59" width="23" height="5" fill="#a8a8a8"/><rect x="14" y="32" width="5" height="22" fill="#a8a8a8"/><rect x="52" y="32" width="5" height="22" fill="#a8a8a8"/><path d="M12.5 65 V16" stroke="#1a8a2a" stroke-width="2.2"/><path d="M9.5 21 L12.5 13.5 L15.5 21 Z" fill="#1a8a2a"/><path d="M9.5 6 L12.5 10 L15.5 6 M12.5 10 V13" fill="none" stroke="#1a8a2a" stroke-width="1.6"/><path d="M12 65 H58" stroke="#d01818" stroke-width="2.4"/><path d="M55 61.5 L63 65 L55 68.5 Z" fill="#d01818"/><path d="M66.5 61.5 L72.5 69 M72.5 61.5 L66.5 69" stroke="#c01818" stroke-width="1.8"/></svg>
<div class="t" style="left:461.50px;top:883.86px;font-size:9px;color:#333;font-weight:normal;transform:scaleX(0.8525);">Superior</div>
<svg class="r" style="left:374px;top:876px;" width="25" height="82" viewBox="0 0 25 82"><defs><linearGradient id="pg" x1="0" y1="0" x2="0" y2="1"><stop offset="0" stop-color="#f4f4f4"/><stop offset="1" stop-color="#e2e2e2"/></linearGradient></defs><rect x="0.7" y="0.7" width="23.3" height="80.5" rx="11.6" fill="url(#pg)" stroke="#b4b4b4" stroke-width="1.2"/><path d="M1 40.5 H24" stroke="#fff" stroke-width="1"/><path d="M12.5 8 L17.5 17 H14 V38.5 H11 V17 H7.5 Z" fill="#4a7fbf"/><path d="M12.5 74 L17.5 65 H14 V43 H11 V65 H7.5 Z" fill="#4a7fbf"/></svg>
<svg class="r" style="left:374px;top:964px;" width="25" height="25" viewBox="0 0 25 25"><circle cx="12.4" cy="12.4" r="11.6" fill="#ececec" stroke="#a0a0a0" stroke-width="1.2"/><path d="M6 12 A6.5 6.5 0 0 1 17 7.5" fill="none" stroke="#4a7fbf" stroke-width="2"/><path d="M15.5 4 L19.5 9 L13.5 9.5 Z" fill="#4a7fbf"/><path d="M18.8 12.5 A6.5 6.5 0 0 1 7.8 17" fill="none" stroke="#4a7fbf" stroke-width="2"/><path d="M9.3 20.5 L5.3 15.5 L11.3 15 Z" fill="#4a7fbf"/></svg>
<svg class="r" style="left:404px;top:964px;" width="83" height="25" viewBox="0 0 83 25"><rect x="0.7" y="0.7" width="81" height="23" rx="11.5" fill="url(#pg)" stroke="#b4b4b4" stroke-width="1.2"/><path d="M41.5 1 V24" stroke="#fff" stroke-width="1"/><path d="M8 12 L17.5 6.5 V10.5 H39 V13.5 H17.5 V17.5 Z" fill="#4a7fbf"/><path d="M75 12 L65.5 6.5 V10.5 H44 V13.5 H65.5 V17.5 Z" fill="#4a7fbf"/></svg>
<div class="r" style="left:1793px;top:957px;width:1px;height:26px;background:#6a6a6a"></div>
<div class="r" style="left:1895px;top:957px;width:1px;height:26px;background:#6a6a6a"></div>
<div class="r" style="left:1793px;top:969px;width:103px;height:2px;background:#8a8a8a"></div>
<div class="r" style="left:0px;top:995px;width:73px;height:21px;background:#fff;border:1px solid #e6e6e6;border-bottom:none;box-sizing:border-box"></div>
<div class="r" style="left:369px;top:994px;width:136px;height:22px;background:#fff;border:1px solid #e0e0e0;border-bottom:none;box-sizing:border-box"></div>
<div class="t" style="left:512.50px;top:1001.54px;font-size:11px;color:#666;font-weight:normal;transform:scaleX(1.0119);">+</div>
<svg class="r" style="left:1895px;top:1002px;" width="7" height="9" viewBox="0 0 7 9"><path d="M5.5 0.8 L1 4.5 L5.5 8.2 Z" fill="none" stroke="#777" stroke-width="1.1"/></svg>
<svg class="r" style="left:1909px;top:1002px;" width="7" height="9" viewBox="0 0 7 9"><path d="M1 0.8 L5.5 4.5 L1 8.2 Z" fill="none" stroke="#777" stroke-width="1.1"/></svg>
<svg class="r" style="left:1408.0px;top:1026px;" width="7" height="5" viewBox="0 0 7 5"><path d="M0.5 0.5 L3.5 3.5 L6.5 0.5" fill="none" stroke="#6f8fbf" stroke-width="1"/></svg>
<svg class="r" style="left:1552.0px;top:1026px;" width="7" height="5" viewBox="0 0 7 5"><path d="M0.5 0.5 L3.5 3.5 L6.5 0.5" fill="none" stroke="#6f8fbf" stroke-width="1"/></svg>
<svg class="r" style="left:1666.5px;top:1026px;" width="7" height="5" viewBox="0 0 7 5"><path d="M0.5 0.5 L3.5 3.5 L6.5 0.5" fill="none" stroke="#6f8fbf" stroke-width="1"/></svg>
<svg class="r" style="left:1755.0px;top:1026px;" width="7" height="5" viewBox="0 0 7 5"><path d="M0.5 0.5 L3.5 3.5 L6.5 0.5" fill="none" stroke="#6f8fbf" stroke-width="1"/></svg>
<svg class="r" style="left:1775.0px;top:1020.5px;" width="15" height="15" viewBox="0 0 15 15"><circle cx="7.5" cy="7.5" r="6.5" fill="none" stroke="#c8daf4" stroke-width="1.4"/><path d="M1 7.5 H14 M7.5 1 V14" stroke="#c8daf4" stroke-width="1.2"/><ellipse cx="7.5" cy="7.5" rx="3" ry="6.5" fill="none" stroke="#c8daf4" stroke-width="1"/></svg>
<svg class="r" style="left:1799.0px;top:1020.5px;" width="15" height="15" viewBox="0 0 15 15"><circle cx="7.5" cy="7.5" r="6.5" fill="none" stroke="#c8daf4" stroke-width="1.4"/><path d="M1 7.5 H14" stroke="#c8daf4" stroke-width="1.2"/><ellipse cx="7.5" cy="7.5" rx="3" ry="6.5" fill="none" stroke="#c8daf4" stroke-width="1"/></svg>
<svg class="r" style="left:1823.5px;top:1020.5px;" width="15" height="15" viewBox="0 0 15 15"><circle cx="7.5" cy="7.5" r="6.5" fill="none" stroke="#c8daf4" stroke-width="1.4"/><path d="M1 8.5 Q7.5 12 14 8.5 M9 1.5 V8.5" fill="none" stroke="#c8daf4" stroke-width="1.2"/></svg>
<svg class="r" style="left:1848.5px;top:1020.5px;" width="15" height="15" viewBox="0 0 15 15"><defs><radialGradient id="sg3" cx="0.4" cy="0.4" r="0.7"><stop offset="0" stop-color="#fff"/><stop offset="0.6" stop-color="#ddd4cc"/><stop offset="1" stop-color="#a8a8b0"/></radialGradient></defs><circle cx="7.5" cy="7.5" r="6.8" fill="url(#sg3)"/><circle cx="7.5" cy="7.5" r="6.8" fill="none" stroke="#bcd4f4" stroke-width="1.2"/></svg>
<svg class="r" style="left:1873.5px;top:1020.5px;" width="15" height="15" viewBox="0 0 15 15"><defs><radialGradient id="sg4" cx="0.4" cy="0.4" r="0.7"><stop offset="0" stop-color="#fff"/><stop offset="0.6" stop-color="#ddd4cc"/><stop offset="1" stop-color="#a8a8b0"/></radialGradient></defs><circle cx="7.5" cy="7.5" r="6.8" fill="url(#sg4)"/></svg>
<svg class="r" style="left:1898.5px;top:1020.5px;" width="15" height="15" viewBox="0 0 15 15"><defs><radialGradient id="sg5" cx="0.4" cy="0.3" r="0.8"><stop offset="0" stop-color="#fff"/><stop offset="1" stop-color="#b0b8c8"/></radialGradient></defs><circle cx="7.5" cy="7.5" r="6.8" fill="url(#sg5)"/><path d="M7.5 7.5 L14 1 V14 H1 Z" fill="#9a9a9a" opacity="0.7"/><path d="M2 13 L13 2" stroke="#444" stroke-width="1.3"/></svg>
</body></html>
